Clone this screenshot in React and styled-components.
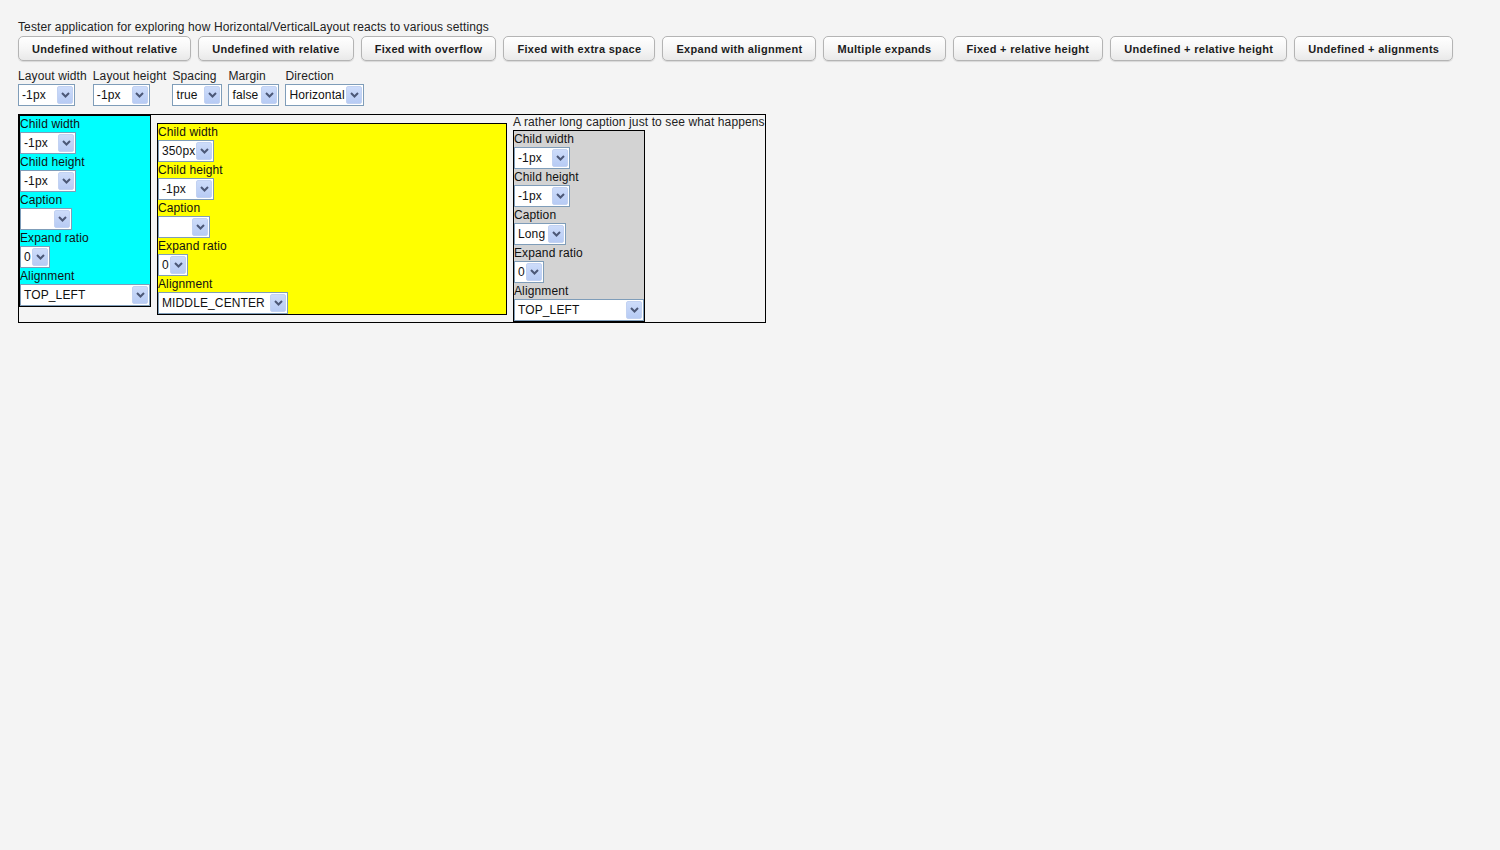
import React from 'react';
import styled, { createGlobalStyle } from 'styled-components';

const GlobalStyle = createGlobalStyle`
  body {
    margin: 0;
    background: #f4f4f4;
    font-family: "Liberation Sans", Arial, sans-serif;
    font-size: 12px;
    letter-spacing: 0.12px;
    color: #222;
  }
`;

const Page = styled.div`
  padding: 19px 18px;
`;

const Title = styled.div`
  line-height: 17px;
  white-space: nowrap;
`;

const ButtonBar = styled.div`
  display: flex;
  gap: 7px;
`;

const Button = styled.button`
  height: 25px;
  padding: 0 13px;
  border: 1px solid #b4b4b4;
  border-radius: 5px;
  background: linear-gradient(#ffffff, #f6f6f6 50%, #e9e9e9);
  box-shadow: 0 1px 1px rgba(0, 0, 0, 0.12);
  font-family: "Liberation Sans", Arial, sans-serif;
  font-size: 11px;
  font-weight: bold;
  letter-spacing: 0.3px;
  color: #1c1c1c;
  white-space: nowrap;
  cursor: pointer;
`;

const ControlsRow = styled.div`
  display: flex;
  gap: 6px;
  margin-top: 8px;
`;

const Field = styled.div`
  display: flex;
  flex-direction: column;
`;

const Label = styled.div`
  line-height: ${({ h }) => h || 15}px;
  white-space: nowrap;
`;

const SelectBox = styled.div`
  box-sizing: border-box;
  width: ${({ w }) => w}px;
  height: 22px;
  display: flex;
  align-items: center;
  background: #fff;
  border: 1px solid #7f9db9;
  font-size: 12px;
  color: #111;
`;

const SelectValue = styled.span`
  flex: 1;
  padding-left: 3px;
  white-space: nowrap;
  overflow: hidden;
`;

const ArrowBox = styled.span`
  box-sizing: border-box;
  width: 16px;
  height: 18px;
  margin-right: 1px;
  display: flex;
  align-items: center;
  justify-content: center;
  background: linear-gradient(#cddcfa, #b7cbf4);
  border: 1px solid #c2d2f2;
  border-radius: 2px;
`;

const LayoutBox = styled.div`
  display: inline-flex;
  gap: 6px;
  margin-top: 8px;
  border: 1px solid #000;
`;

const Slot = styled.div`
  display: flex;
  flex-direction: column;
  justify-content: ${({ center }) => (center ? 'center' : 'flex-start')};
`;

const Caption = styled.div`
  line-height: 15px;
  white-space: nowrap;
`;

const ChildBox = styled.div`
  box-sizing: border-box;
  width: ${({ w }) => w}px;
  border: 1px solid #000;
  background: ${({ bg }) => bg};
  color: #111;
`;

const Chevron = () => (
  <svg width="9" height="6" viewBox="0 0 9 6">
    <path d="M1 1 L4.5 4.5 L8 1" fill="none" stroke="#4c5877" strokeWidth="2" />
  </svg>
);

const Select = ({ w, value }) => (
  <SelectBox w={w}>
    <SelectValue>{value}</SelectValue>
    <ArrowBox>
      <Chevron />
    </ArrowBox>
  </SelectBox>
);

const buttons = [
  'Undefined without relative',
  'Undefined with relative',
  'Fixed with overflow',
  'Fixed with extra space',
  'Expand with alignment',
  'Multiple expands',
  'Fixed + relative height',
  'Undefined + relative height',
  'Undefined + alignments',
];

const controls = [
  { label: 'Layout width', value: '-1px', w: 57 },
  { label: 'Layout height', value: '-1px', w: 57 },
  { label: 'Spacing', value: 'true', w: 50 },
  { label: 'Margin', value: 'false', w: 51 },
  { label: 'Direction', value: 'Horizontal', w: 79 },
];

const Child = ({ bg, w, width, caption, align }) => (
  <ChildBox bg={bg} w={w}>
    <Label h={16}>Child width</Label>
    <Select w={56} value={width} />
    <Label h={16}>Child height</Label>
    <Select w={56} value="-1px" />
    <Label h={16}>Caption</Label>
    <Select w={52} value={caption} />
    <Label h={16}>Expand ratio</Label>
    <Select w={30} value="0" />
    <Label h={16}>Alignment</Label>
    <Select w={130} value={align} />
  </ChildBox>
);

export default function App() {
  return (
    <Page>
      <GlobalStyle />
      <Title>Tester application for exploring how Horizontal/VerticalLayout reacts to various settings</Title>
      <ButtonBar>
        {buttons.map((b) => (
          <Button key={b}>{b}</Button>
        ))}
      </ButtonBar>
      <ControlsRow>
        {controls.map((c) => (
          <Field key={c.label}>
            <Label>{c.label}</Label>
            <Select w={c.w} value={c.value} />
          </Field>
        ))}
      </ControlsRow>
      <LayoutBox>
        <Slot>
          <Child bg="#00ffff" w={132} width="-1px" caption="" align="TOP_LEFT" />
        </Slot>
        <Slot center>
          <Child bg="#ffff00" w={350} width="350px" caption="" align="MIDDLE_CENTER" />
        </Slot>
        <Slot>
          <Caption>A rather long caption just to see what happens</Caption>
          <Child bg="#d3d3d3" w={132} width="-1px" caption="Long" align="TOP_LEFT" />
        </Slot>
      </LayoutBox>
    </Page>
  );
}
